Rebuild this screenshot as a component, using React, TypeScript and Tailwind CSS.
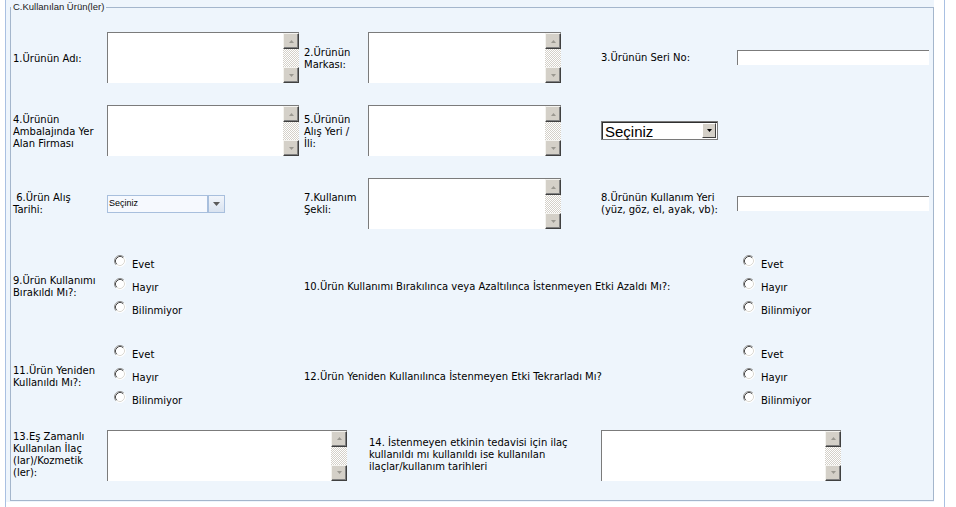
import type { ReactNode } from 'react'

const options = ['Evet', 'Hayır', 'Bilinmiyor']

function Arrow({ up, color }: { up?: boolean; color: string }) {
  return (
    <svg width="5" height="3" viewBox="0 0 5 3">
      <path d={up ? 'M2.5 0 L5 3 H0 Z' : 'M0 0 H5 L2.5 3 Z'} fill={color} />
    </svg>
  )
}

function ScrollButton({ up }: { up?: boolean }) {
  return (
    <div className="flex h-[16px] w-[16px] items-center justify-center border border-t-[#f4f3ef] border-l-[#f4f3ef] border-r-[#404040] border-b-[#404040] bg-[#d4d0c8] shadow-[inset_-1px_-1px_0_#808080]">
      <Arrow up={up} color="#9a9890" />
    </div>
  )
}

function ScrollBar() {
  return (
    <div className="flex w-[16px] flex-col">
      <ScrollButton up />
      <div className="flex-1 bg-[repeating-conic-gradient(#d4d0c8_0%_25%,#ffffff_0%_50%)] bg-[length:2px_2px]" />
      <ScrollButton />
    </div>
  )
}

function Memo({ className }: { className: string }) {
  return (
    <div className={`flex h-[51px] border-t border-l border-[#7b7b7b] bg-white ${className}`}>
      <textarea className="h-full min-w-0 flex-1 resize-none bg-white outline-none" />
      <ScrollBar />
    </div>
  )
}

function TextBox() {
  return <div className="h-[15px] w-[192px] border-t border-l border-[#7b7b7b] bg-white" />
}

function RadioMark() {
  return (
    <svg width="12" height="12" viewBox="0 0 12 12" className="shrink-0">
      <circle cx="6" cy="6" r="5.5" fill="#ffffff" />
      <path d="M2.11 9.89 A5.5 5.5 0 0 1 9.89 2.11" stroke="#8c8c8c" fill="none" />
      <path d="M2.82 9.18 A4.5 4.5 0 0 1 9.18 2.82" stroke="#4a4a4a" fill="none" />
      <path d="M9.89 2.11 A5.5 5.5 0 0 1 2.11 9.89" stroke="#ffffff" fill="none" />
      <path d="M9.18 2.82 A4.5 4.5 0 0 1 2.82 9.18" stroke="#dcdad4" fill="none" />
    </svg>
  )
}

function Radios({ className }: { className: string }) {
  return (
    <div className={`flex flex-col ${className}`}>
      {options.map((o) => (
        <label key={o} className="flex h-[23px] items-start gap-[6px]">
          <span className="mt-[3px]">
            <RadioMark />
          </span>
          <span className="mt-[5px]">{o}</span>
        </label>
      ))}
    </div>
  )
}

function Label({ children, className = '' }: { children: ReactNode; className?: string }) {
  return <div className={`leading-[12px] ${className}`}>{children}</div>
}

export default function App() {
  return (
    <div className="h-[507px] w-[956px] overflow-hidden bg-white font-['DejaVu_Sans',Verdana,sans-serif] text-[10px] text-black">
      <div className="ml-[5px] h-full w-[940px] border-x border-[#a9c0e2]">
        <div className="h-[502px] w-[928px] bg-[#eef5fc] pt-[2px] pl-[4px]">
          <fieldset className="m-0 h-[499px] min-w-0 border border-[#a4b6cc] p-0">
            <legend className="px-[2px] font-['Liberation_Sans',Arial,sans-serif] text-[9.5px] leading-[10px] text-[#222]">
              C.Kullanılan Ürün(ler)
            </legend>

            <div className="pt-[9px] pl-[2px]">
              {/* 1 - 3 */}
              <div className="grid h-[73px] grid-cols-[94px_197px_64px_233px_136px_193px] items-center">
                <Label className="mt-[3px]">1.Ürünün Adı:</Label>
                <Memo className="w-[192px]" />
                <Label className="mt-[2px]">
                  2.Ürünün
                  <br />
                  Markası:
                </Label>
                <Memo className="w-[193px]" />
                <Label>3.Ürünün Seri No:</Label>
                <TextBox />
              </div>

              {/* 4 - 5 */}
              <div className="grid h-[73px] grid-cols-[94px_197px_64px_233px_136px_193px] items-center">
                <Label className="mt-[3px]">
                  4.Ürünün
                  <br />
                  Ambalajında Yer
                  <br />
                  Alan Firması
                </Label>
                <Memo className="w-[192px]" />
                <Label className="mt-[3px]">
                  5.Ürünün
                  <br />
                  Alış Yeri /
                  <br />
                  İli:
                </Label>
                <Memo className="w-[193px]" />
                <div className="flex h-[19px] w-[117px] items-center justify-between border border-[#7a7a7a] bg-white shadow-[inset_1px_1px_0_#303030]">
                  <span className="pt-[1px] pl-[3px] font-['Liberation_Sans',Arial,sans-serif] text-[15px] leading-none text-black">
                    Seçiniz
                  </span>
                  <span className="mr-[1px] flex h-[15px] w-[14px] items-center justify-center border border-t-white border-l-white border-r-[#404040] border-b-[#404040] bg-[#d4d0c8]">
                    <Arrow color="#000000" />
                  </span>
                </div>
                <div />
              </div>

              {/* 6 - 8 */}
              <div className="grid h-[73px] grid-cols-[94px_197px_64px_233px_136px_193px] items-center">
                <Label>
                  {'\u00a0'}6.Ürün Alış
                  <br />
                  Tarihi:
                </Label>
                <div className="flex h-[18px] w-[118px]">
                  <div className="flex flex-1 items-center border border-[#a8bfdd] bg-[#f6f9fe] pl-[1px] font-['Liberation_Sans',Arial,sans-serif] text-[9px] text-black">
                    Seçiniz
                  </div>
                  <div className="flex w-[17px] items-center justify-center border border-[#a8bfdd] bg-gradient-to-b from-[#f1f5fb] to-[#d9e3f0]">
                    <svg width="7" height="4" viewBox="0 0 7 4">
                      <path d="M0 0 H7 L3.5 4 Z" fill="#5a5a5a" />
                    </svg>
                  </div>
                </div>
                <Label>
                  7.Kullanım
                  <br />
                  Şekli:
                </Label>
                <Memo className="w-[193px]" />
                <Label>
                  8.Ürünün Kullanım Yeri
                  <br />
                  (yüz, göz, el, ayak, vb):
                </Label>
                <TextBox />
              </div>

              {/* 9 - 10 */}
              <div className="flex h-[93px] items-center">
                <Label className="w-[94px]">
                  9.Ürün Kullanımı
                  <br />
                  Bırakıldı Mı?:
                </Label>
                <Radios className="w-[197px] pl-[7px]" />
                <Label className="w-[433px]">
                  10.Ürün Kullanımı Bırakılınca veya Azaltılınca İstenmeyen Etki Azaldı Mı?:
                </Label>
                <Radios className="w-[193px] pl-[6px]" />
              </div>

              {/* 11 - 12 */}
              <div className="flex h-[87px] items-center">
                <Label className="w-[94px]">
                  11.Ürün Yeniden
                  <br />
                  Kullanıldı Mı?:
                </Label>
                <Radios className="w-[197px] pl-[7px]" />
                <Label className="w-[433px]">
                  12.Ürün Yeniden Kullanılınca İstenmeyen Etki Tekrarladı Mı?
                </Label>
                <Radios className="w-[193px] pl-[6px]" />
              </div>

              {/* 13 - 14 */}
              <div className="flex h-[70px] items-center">
                <Label className="w-[94px]">
                  13.Eş Zamanlı
                  <br />
                  Kullanılan İlaç
                  <br />
                  (lar)/Kozmetik
                  <br />
                  (ler):
                </Label>
                <Memo className="w-[240px]" />
                <Label className="ml-[22px] w-[232px]">
                  14. İstenmeyen etkinin tedavisi için ilaç
                  <br />
                  kullanıldı mı kullanıldı ise kullanılan
                  <br />
                  ilaçlar/kullanım tarihleri
                </Label>
                <Memo className="w-[240px]" />
              </div>
            </div>
          </fieldset>
        </div>
      </div>
    </div>
  )
}
